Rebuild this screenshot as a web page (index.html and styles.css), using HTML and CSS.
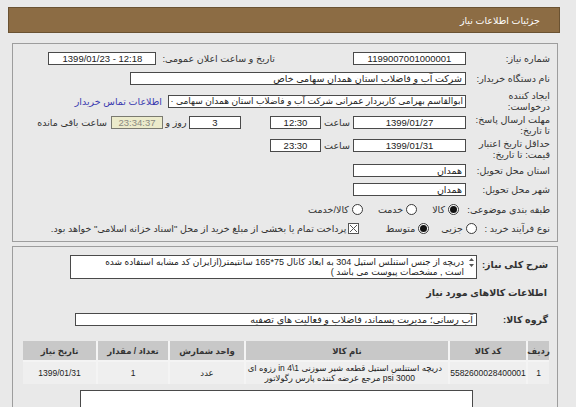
FILE: index.html
```html
<!DOCTYPE html>
<html lang="fa" dir="rtl">
<head>
<meta charset="utf-8">
<title>جزئیات اطلاعات نیاز</title>
<link rel="stylesheet" href="styles.css">
</head>
<body>
<div class="page">
  <div class="header">جزئیات اطلاعات نیاز</div>

  <div class="panel p1">
    <div class="row r1">
      <span class="lbl">شماره نیاز:</span>
      <span class="box w113">1199007001000001</span>
      <span class="lbl2">تاریخ و ساعت اعلان عمومی:</span>
      <span class="box w108 ltr">1399/01/23 - 12:18</span>
    </div>
    <div class="row r2">
      <span class="lbl">نام دستگاه خریدار:</span>
      <span class="box w336 tr">شرکت آب و فاضلاب استان همدان سهامی خاص</span>
    </div>
    <div class="row r3">
      <span class="lbl">ایجاد کننده<br>درخواست:</span>
      <span class="box w298 tr small">ابوالقاسم بهرامی کاربردار عمرانی شرکت آب و فاضلاب استان همدان سهامی ·</span>
      <a class="link" href="#">اطلاعات تماس خریدار</a>
    </div>
    <div class="row r4">
      <span class="lbl">مهلت ارسال پاسخ:<br>تا تاریخ:</span>
      <span class="box w113">1399/01/27</span>
      <span class="sa">ساعت</span>
      <span class="box w51">12:30</span>
      <span class="box w52 days">3</span>
      <span class="rz">روز و</span>
      <span class="box w52 cd">23:34:37</span>
      <span class="rem">ساعت باقی مانده</span>
    </div>
    <div class="row r5">
      <span class="lbl">حداقل تاریخ اعتبار<br>قیمت: تا تاریخ:</span>
      <span class="box w113">1399/01/31</span>
      <span class="sa">ساعت</span>
      <span class="box w51">23:30</span>
    </div>
    <div class="row r6">
      <span class="lbl">استان محل تحویل:</span>
      <span class="box w113 tr">همدان</span>
    </div>
    <div class="row r7">
      <span class="lbl">شهر محل تحویل:</span>
      <span class="box w113 tr">همدان</span>
    </div>
    <div class="row r8">
      <span class="lbl wide">طبقه بندی موضوعی:</span>
      <span class="opt"><i class="radio on"></i>کالا</span>
      <span class="opt"><i class="radio"></i>خدمت</span>
      <span class="opt"><i class="radio"></i>کالا/خدمت</span>
    </div>
    <div class="row r9">
      <span class="lbl narrow">نوع فرآیند خرید :</span>
      <span class="opt"><i class="radio"></i>جزیی</span>
      <span class="opt"><i class="radio on"></i>متوسط</span>
      <span class="opt chk"><svg class="cb" width="11" height="11" viewBox="0 0 11 11"><rect x="0.5" y="0.5" width="10" height="10" fill="#fff" stroke="#555"/><path d="M2 2L9 9M9 2L2 9" stroke="#555" stroke-width="1"/></svg>پرداخت تمام یا بخشی از مبلغ خرید از محل "اسناد خزانه اسلامی" خواهد بود.</span>
    </div>
  </div>

  <div class="panel p2">
    <div class="row ra">
      <span class="lbl3 b">شرح کلی نیاز:</span>
      <div class="tarea">
        <svg class="arr" width="5" height="9" viewBox="0 0 5 9"><path d="M0 3L2.5 0L5 3Z M0 6L2.5 9L5 6Z" fill="#555"/></svg>
        <div class="ttext">دریچه از جنس استنلس استیل 304 به ابعاد کانال 75*165 سانتیمتر(ازایران کد مشابه استفاده شده<br>است , مشخصات پیوست می باشد )</div>
      </div>
    </div>
    <div class="row rb b">اطلاعات کالاهای مورد نیاز</div>
    <div class="row rc">
      <span class="lbl4 b">گروه کالا:</span>
      <span class="box w402 tr">آب رسانی؛ مدیریت پسماند، فاضلاب و فعالیت های تصفیه</span>
    </div>
    <div class="grid">
      <div class="th">ردیف</div>
      <div class="th">کد کالا</div>
      <div class="th">نام کالا</div>
      <div class="th">واحد شمارش</div>
      <div class="th">تعداد / مقدار</div>
      <div class="th">تاریخ نیاز</div>
      <div class="td">1</div>
      <div class="td">5582600028400001</div>
      <div class="td name"><span>دریچه استنلس استیل قطعه شیر سوزنی 1\4 in رزوه ای</span><span class="l2">3000 psi مرجع عرضه کننده پارس رگولاتور</span></div>
      <div class="td">عدد</div>
      <div class="td">1</div>
      <div class="td">1399/01/31</div>
    </div>
    <div class="bottombox"></div>
  </div>
</div>
</body>
</html>
```

FILE: styles.css
```css
html, body {
  margin: 0;
  padding: 0;
  background: #e9e9e9;
}
body {
  font-family: "Liberation Sans", "DejaVu Sans", sans-serif;
  font-size: 9.5px;
  color: #333;
  direction: rtl;
  overflow: hidden;
}
.page {
  padding: 7px 16px 0 8px;
}
.header {
  height: 24px;
  background: #8c6c44;
  border: 1px solid #6a5232;
  color: #fff;
  display: flex;
  align-items: center;
  padding-right: 19px;
  font-size: 9.5px;
}
.panel {
  border: 1px solid #9d9d9d;
  margin: 0 2px 0 4px;
}
.p1 {
  margin-top: 10px;
  padding: 4px 7px 3px 0;
}
.p2 {
  margin-top: 4px;
  padding: 8px 9px 40px 0;
}
.row {
  display: flex;
  align-items: center;
}
.lbl {
  width: 84px;
  line-height: 11px;
  white-space: nowrap;
}
.lbl.wide {
  width: 91px;
}
.lbl.narrow {
  width: 73px;
}
.box {
  display: inline-block;
  box-sizing: border-box;
  height: 13px;
  line-height: 11px;
  border: 1px solid #4a4a4a;
  background: #fff;
  text-align: center;
  white-space: nowrap;
  overflow: hidden;
  color: #222;
}
.box.ltr {
  direction: ltr;
}
.box.tr {
  text-align: right;
  padding-right: 3px;
}
.box.small {
  font-size: 9px;
  padding-right: 2px;
}
.w113 { width: 113px; }
.w108 { width: 108px; }
.w336 { width: 336px; }
.w298 { width: 298px; }
.w51 { width: 51px; }
.w52 { width: 52px; }
.w402 { width: 402px; }
.lbl2 {
  margin-right: 78px;
  margin-left: 6px;
  white-space: nowrap;
}
.r1 { height: 20px; }
.r2 { height: 21px; }
.r3 { height: 24px; }
.r4 { height: 24px; }
.r5 { height: 24px; }
.r6 { height: 18px; }
.r7 { height: 21px; }
.r8 { height: 18px; }
.r9 { height: 20px; }
.r4 .box { margin-bottom: 5px; }
.r4 .sa, .r4 .rz, .r4 .rem { margin-bottom: 5px; }
.r5 .box, .r5 .sa { margin-bottom: 8px; }
.link {
  color: #3b3bb0;
  text-decoration: none;
  margin-right: 6px;
}
.sa {
  width: 32px;
  text-align: center;
}
.days {
  margin-right: 29px;
}
.rz {
  width: 26px;
  text-align: center;
}
.cd {
  background: #ecebcb;
  color: #8a8a80;
  border-color: #7a7a70;
}
.rem {
  margin-right: 4px;
}
.opt {
  display: inline-flex;
  align-items: center;
  gap: 3px;
  margin-left: 10px;
}
.r8 .opt {
  margin-left: 15px;
}
.r9 .opt {
  margin-left: 12px;
}
.r9 .chk {
  margin-right: 14px;
  gap: 2px;
}
.radio {
  display: inline-block;
  box-sizing: border-box;
  width: 11px;
  height: 11px;
  border-radius: 50%;
  border: 1px solid #3a3a3a;
  background: #fff;
  position: relative;
}
.radio.on::after {
  content: "";
  position: absolute;
  left: 1px;
  top: 1px;
  width: 7px;
  height: 7px;
  border-radius: 50%;
  background: #111;
}
.b {
  font-weight: bold;
}
.lbl3 {
  width: 71px;
  padding-top: 3px;
  line-height: 13px;
}
.ra {
  align-items: flex-start;
}
.tarea {
  box-sizing: border-box;
  width: 407px;
  height: 24px;
  border: 1px solid #4a4a4a;
  background: #fff;
  display: flex;
  align-items: flex-start;
  padding: 1px 2px 0 0;
}
.arr {
  margin-top: 1px;
  flex: none;
}
.ttext {
  margin-right: 5px;
  line-height: 10px;
  white-space: nowrap;
  color: #222;
  font-size: 9px;
}
.rb {
  margin-top: 7px;
  height: 13px;
  padding-right: 1px;
}
.rc {
  margin-top: 14px;
  height: 13px;
}
.lbl4 {
  width: 71px;
}
.grid {
  display: grid;
  grid-template-columns: 21px 76px 202px 74px 70px 73px;
  grid-template-rows: 19px 22px;
  gap: 2px;
  width: 526px;
  margin: 15px -1px 0 0;
  background: #f4f4f4;
  font-size: 8.5px;
}
.th {
  background: #c8c8c8;
  font-weight: bold;
  color: #333;
  display: flex;
  align-items: center;
  justify-content: center;
}
.td {
  background: #efefef;
  display: flex;
  align-items: center;
  justify-content: center;
  color: #222;
}
.td.name {
  flex-direction: column;
  align-items: flex-start;
  justify-content: center;
  padding-right: 6px;
  line-height: 10px;
  white-space: nowrap;
  overflow: hidden;
}
.td.name .l2 {
  margin-right: 27px;
}
.bottombox {
  width: 391px;
  height: 30px;
  margin: 6px 75px 0 0;
  background: #fff;
  border: 1px solid #4a4a4a;
}
```
